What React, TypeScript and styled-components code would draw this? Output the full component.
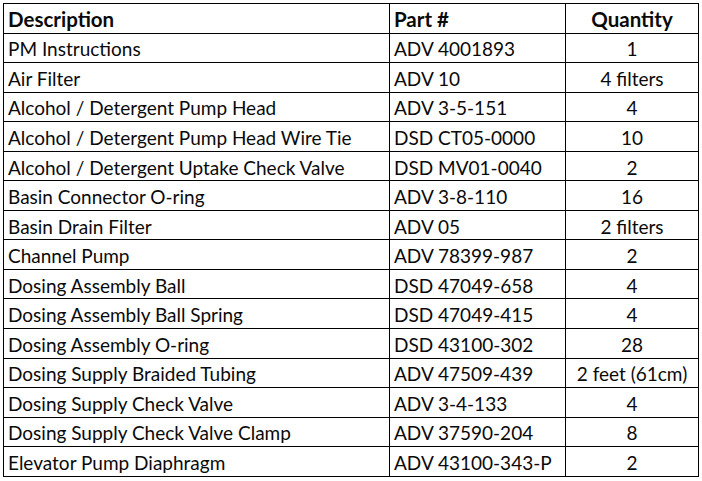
import React from 'react';
import styled, { createGlobalStyle } from 'styled-components';

const GlobalStyle = createGlobalStyle`
  html, body {
    margin: 0;
    padding: 0;
    background: #ffffff;
  }
`;

type Part = {
  description: string;
  part: string;
  quantity: string;
};

const parts: Part[] = [
  { description: 'PM Instructions', part: 'ADV 4001893', quantity: '1' },
  { description: 'Air Filter', part: 'ADV 10', quantity: '4 filters' },
  { description: 'Alcohol / Detergent Pump Head', part: 'ADV 3-5-151', quantity: '4' },
  { description: 'Alcohol / Detergent Pump Head Wire Tie', part: 'DSD CT05-0000', quantity: '10' },
  { description: 'Alcohol / Detergent Uptake Check Valve', part: 'DSD MV01-0040', quantity: '2' },
  { description: 'Basin Connector O-ring', part: 'ADV 3-8-110', quantity: '16' },
  { description: 'Basin Drain Filter', part: 'ADV 05', quantity: '2 filters' },
  { description: 'Channel Pump', part: 'ADV 78399-987', quantity: '2' },
  { description: 'Dosing Assembly Ball', part: 'DSD 47049-658', quantity: '4' },
  { description: 'Dosing Assembly Ball Spring', part: 'DSD 47049-415', quantity: '4' },
  { description: 'Dosing Assembly O-ring', part: 'DSD 43100-302', quantity: '28' },
  { description: 'Dosing Supply Braided Tubing', part: 'ADV 47509-439', quantity: '2 feet (61cm)' },
  { description: 'Dosing Supply Check Valve', part: 'ADV 3-4-133', quantity: '4' },
  { description: 'Dosing Supply Check Valve Clamp', part: 'ADV 37590-204', quantity: '8' },
  { description: 'Elevator Pump Diaphragm', part: 'ADV 43100-343-P', quantity: '2' },
];

const Page = styled.div`
  padding: 3px 0 0 3px;
  font-family: Lato, 'Liberation Sans', sans-serif;
  color: #0a0a0a;
`;

const Table = styled.table`
  border-collapse: collapse;
  table-layout: fixed;
  width: 695px;
`;

const Row = styled.tr`
  height: 29.55px;
`;

const Cell = styled.td<{ $center?: boolean; $head?: boolean }>`
  border: 1.3px solid #000000;
  padding: 2px 4px 0 4px;
  font-size: ${(p) => (p.$head ? '20.5px' : '19px')};
  font-weight: ${(p) => (p.$head ? 700 : 400)};
  text-align: ${(p) => (p.$center ? 'center' : 'left')};
  white-space: nowrap;
  overflow: hidden;
  line-height: 1;
  vertical-align: middle;
`;

export default function App(): JSX.Element {
  return (
    <Page>
      <GlobalStyle />
      <Table>
        <colgroup>
          <col style={{ width: 386 }} />
          <col style={{ width: 176 }} />
          <col style={{ width: 133 }} />
        </colgroup>
        <thead>
          <Row>
            <Cell as="th" $head>Description</Cell>
            <Cell as="th" $head>Part #</Cell>
            <Cell as="th" $head $center>Quantity</Cell>
          </Row>
        </thead>
        <tbody>
          {parts.map((item) => (
            <Row key={item.description}>
              <Cell>{item.description}</Cell>
              <Cell>{item.part}</Cell>
              <Cell $center>{item.quantity}</Cell>
            </Row>
          ))}
        </tbody>
      </Table>
    </Page>
  );
}
